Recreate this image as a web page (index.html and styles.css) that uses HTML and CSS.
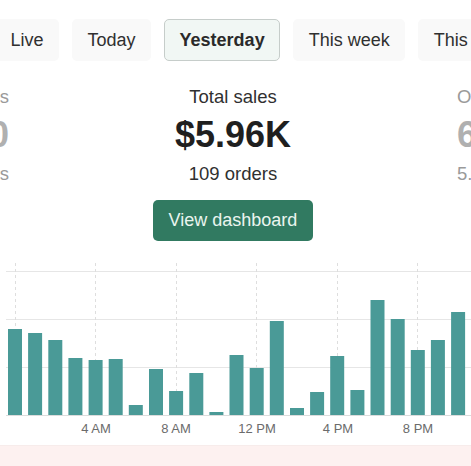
FILE: index.html
```html
<!DOCTYPE html>
<html lang="en">
<head>
    <meta charset="UTF-8">
    <meta name="viewport" content="width=device-width, initial-scale=1.0">
    <title>Sales overview</title>
    <link rel="stylesheet" href="styles.css">
</head>
<body>
    <nav class="tabs">
        <button class="tab">Live</button>
        <button class="tab">Today</button>
        <button class="tab tab-active">Yesterday</button>
        <button class="tab">This week</button>
        <button class="tab">This month</button>
    </nav>

    <section class="summary">
        <div class="stats">
            <div class="stat stat-left">
                <span class="stat-label">Sessions</span>
                <span class="stat-value">2,170</span>
                <span class="stat-sub">visitors</span>
            </div>
            <div class="stat stat-main">
                <span class="stat-label">Total sales</span>
                <span class="stat-value">$5.96K</span>
                <span class="stat-sub">109 orders</span>
            </div>
            <div class="stat stat-right">
                <span class="stat-label">Orders</span>
                <span class="stat-value">64</span>
                <span class="stat-sub">5.0% conversion</span>
            </div>
        </div>
        <div class="actions">
            <button class="btn-primary">View dashboard</button>
        </div>
    </section>

    <div class="chart">
        <svg width="471" height="190" viewBox="0 0 471 190">
            <g class="grid-h">
                <line x1="6" y1="16.5" x2="471" y2="16.5"/>
                <line x1="6" y1="64.5" x2="471" y2="64.5"/>
                <line x1="6" y1="112.5" x2="471" y2="112.5"/>
            </g>
            <g class="grid-v">
                <line x1="15.5" y1="8" x2="15.5" y2="160"/>
                <line x1="95.5" y1="8" x2="95.5" y2="160"/>
                <line x1="176.5" y1="8" x2="176.5" y2="160"/>
                <line x1="256.5" y1="8" x2="256.5" y2="160"/>
                <line x1="337.5" y1="8" x2="337.5" y2="160"/>
                <line x1="417.5" y1="8" x2="417.5" y2="160"/>
            </g>
            <g class="bars">
                <rect x="8" y="74" width="14" height="86"/>
                <rect x="28.1" y="78" width="14" height="82"/>
                <rect x="48.3" y="85" width="14" height="75"/>
                <rect x="68.4" y="103" width="14" height="57"/>
                <rect x="88.6" y="105" width="14" height="55"/>
                <rect x="108.7" y="104" width="14" height="56"/>
                <rect x="128.8" y="150" width="14" height="10"/>
                <rect x="149" y="114" width="14" height="46"/>
                <rect x="169.1" y="136" width="14" height="24"/>
                <rect x="189.3" y="118" width="14" height="42"/>
                <rect x="209.4" y="157" width="14" height="3"/>
                <rect x="229.5" y="100" width="14" height="60"/>
                <rect x="249.7" y="113" width="14" height="47"/>
                <rect x="269.8" y="66" width="14" height="94"/>
                <rect x="290" y="153" width="14" height="7"/>
                <rect x="310.1" y="137" width="14" height="23"/>
                <rect x="330.2" y="101" width="14" height="59"/>
                <rect x="350.4" y="135" width="14" height="25"/>
                <rect x="370.5" y="45" width="14" height="115"/>
                <rect x="390.7" y="64" width="14" height="96"/>
                <rect x="410.8" y="95" width="14" height="65"/>
                <rect x="430.9" y="85" width="14" height="75"/>
                <rect x="451.1" y="57" width="14" height="103"/>
                <rect x="471.2" y="60" width="14" height="100"/>
            </g>
            <line class="axis" x1="6" y1="160.5" x2="471" y2="160.5"/>
            <g class="axis-labels">
                <text x="96" y="178">4 AM</text>
                <text x="176" y="178">8 AM</text>
                <text x="257" y="178">12 PM</text>
                <text x="338" y="178">4 PM</text>
                <text x="418" y="178">8 PM</text>
            </g>
        </svg>
    </div>

    <footer class="notice"></footer>
</body>
</html>
```

FILE: styles.css
```css
body, button {
    margin: 0;
    padding: 0;
    box-sizing: border-box;
}

body {
    font-family: "Liberation Sans", Arial, sans-serif;
    background-color: #fff;
    color: #303030;
    overflow: hidden;
}

/* period tabs, scrolled a little to the left */
.tabs {
    display: flex;
    gap: 13px;
    margin-left: -5px;
    padding-top: 19px;
    white-space: nowrap;
}

.tab {
    flex: none;
    height: 42px;
    padding: 0 14.5px;
    font-family: inherit;
    font-size: 18px;
    line-height: 40px;
    color: #303030;
    background-color: #f9f9f9;
    border: 1px solid transparent;
    border-radius: 5px;
}

.tab-active {
    font-weight: bold;
    color: #2a2a2a;
    background-color: #f1f7f4;
    border-color: #c6cdca;
}

.summary {
    padding-right: 5px;
    margin-top: 25px;
}

.stats {
    display: grid;
    grid-template-columns: minmax(0, 1fr) auto minmax(0, 1fr);
    column-gap: 166px;
    white-space: nowrap;
}

.stat {
    display: flex;
    flex-direction: column;
    align-items: center;
    min-width: 0;
}

.stat-left {
    align-items: flex-end;
    color: #9a9a9a;
}

.stat-right {
    align-items: flex-start;
    color: #9a9a9a;
}

.stat-label {
    font-size: 18.5px;
    line-height: 22px;
}

.stat-value {
    margin-top: 7px;
    font-size: 36px;
    font-weight: bold;
    line-height: 40px;
    color: #1f1f1f;
}

.stat-left .stat-value,
.stat-right .stat-value {
    color: #b0b0b0;
}

.stat-sub {
    margin-top: 8px;
    font-size: 18.5px;
    line-height: 22px;
}

.actions {
    display: flex;
    justify-content: center;
    margin-top: 15px;
}

.btn-primary {
    height: 41px;
    padding: 0 16px;
    font-family: inherit;
    font-size: 18px;
    color: #eaf5ef;
    background-color: #317a61;
    border: none;
    border-radius: 5px;
    cursor: pointer;
}

.chart {
    margin-top: 14px;
    height: 190px;
}

.chart svg {
    display: block;
}

.grid-h line {
    stroke: #e6e6e6;
    stroke-width: 1;
}

.grid-v line {
    stroke: #dedede;
    stroke-width: 1;
    stroke-dasharray: 3 3;
}

.bars rect {
    fill: #4a9a97;
}

.axis {
    stroke: #dcdcdc;
    stroke-width: 1;
}

.axis-labels text {
    font-family: "Liberation Sans", Arial, sans-serif;
    font-size: 13px;
    fill: #6b6b6b;
    text-anchor: middle;
}

.notice {
    height: 30px;
    background-color: #fdf1f0;
    border-top: 1px solid #f7eceb;
}
```
